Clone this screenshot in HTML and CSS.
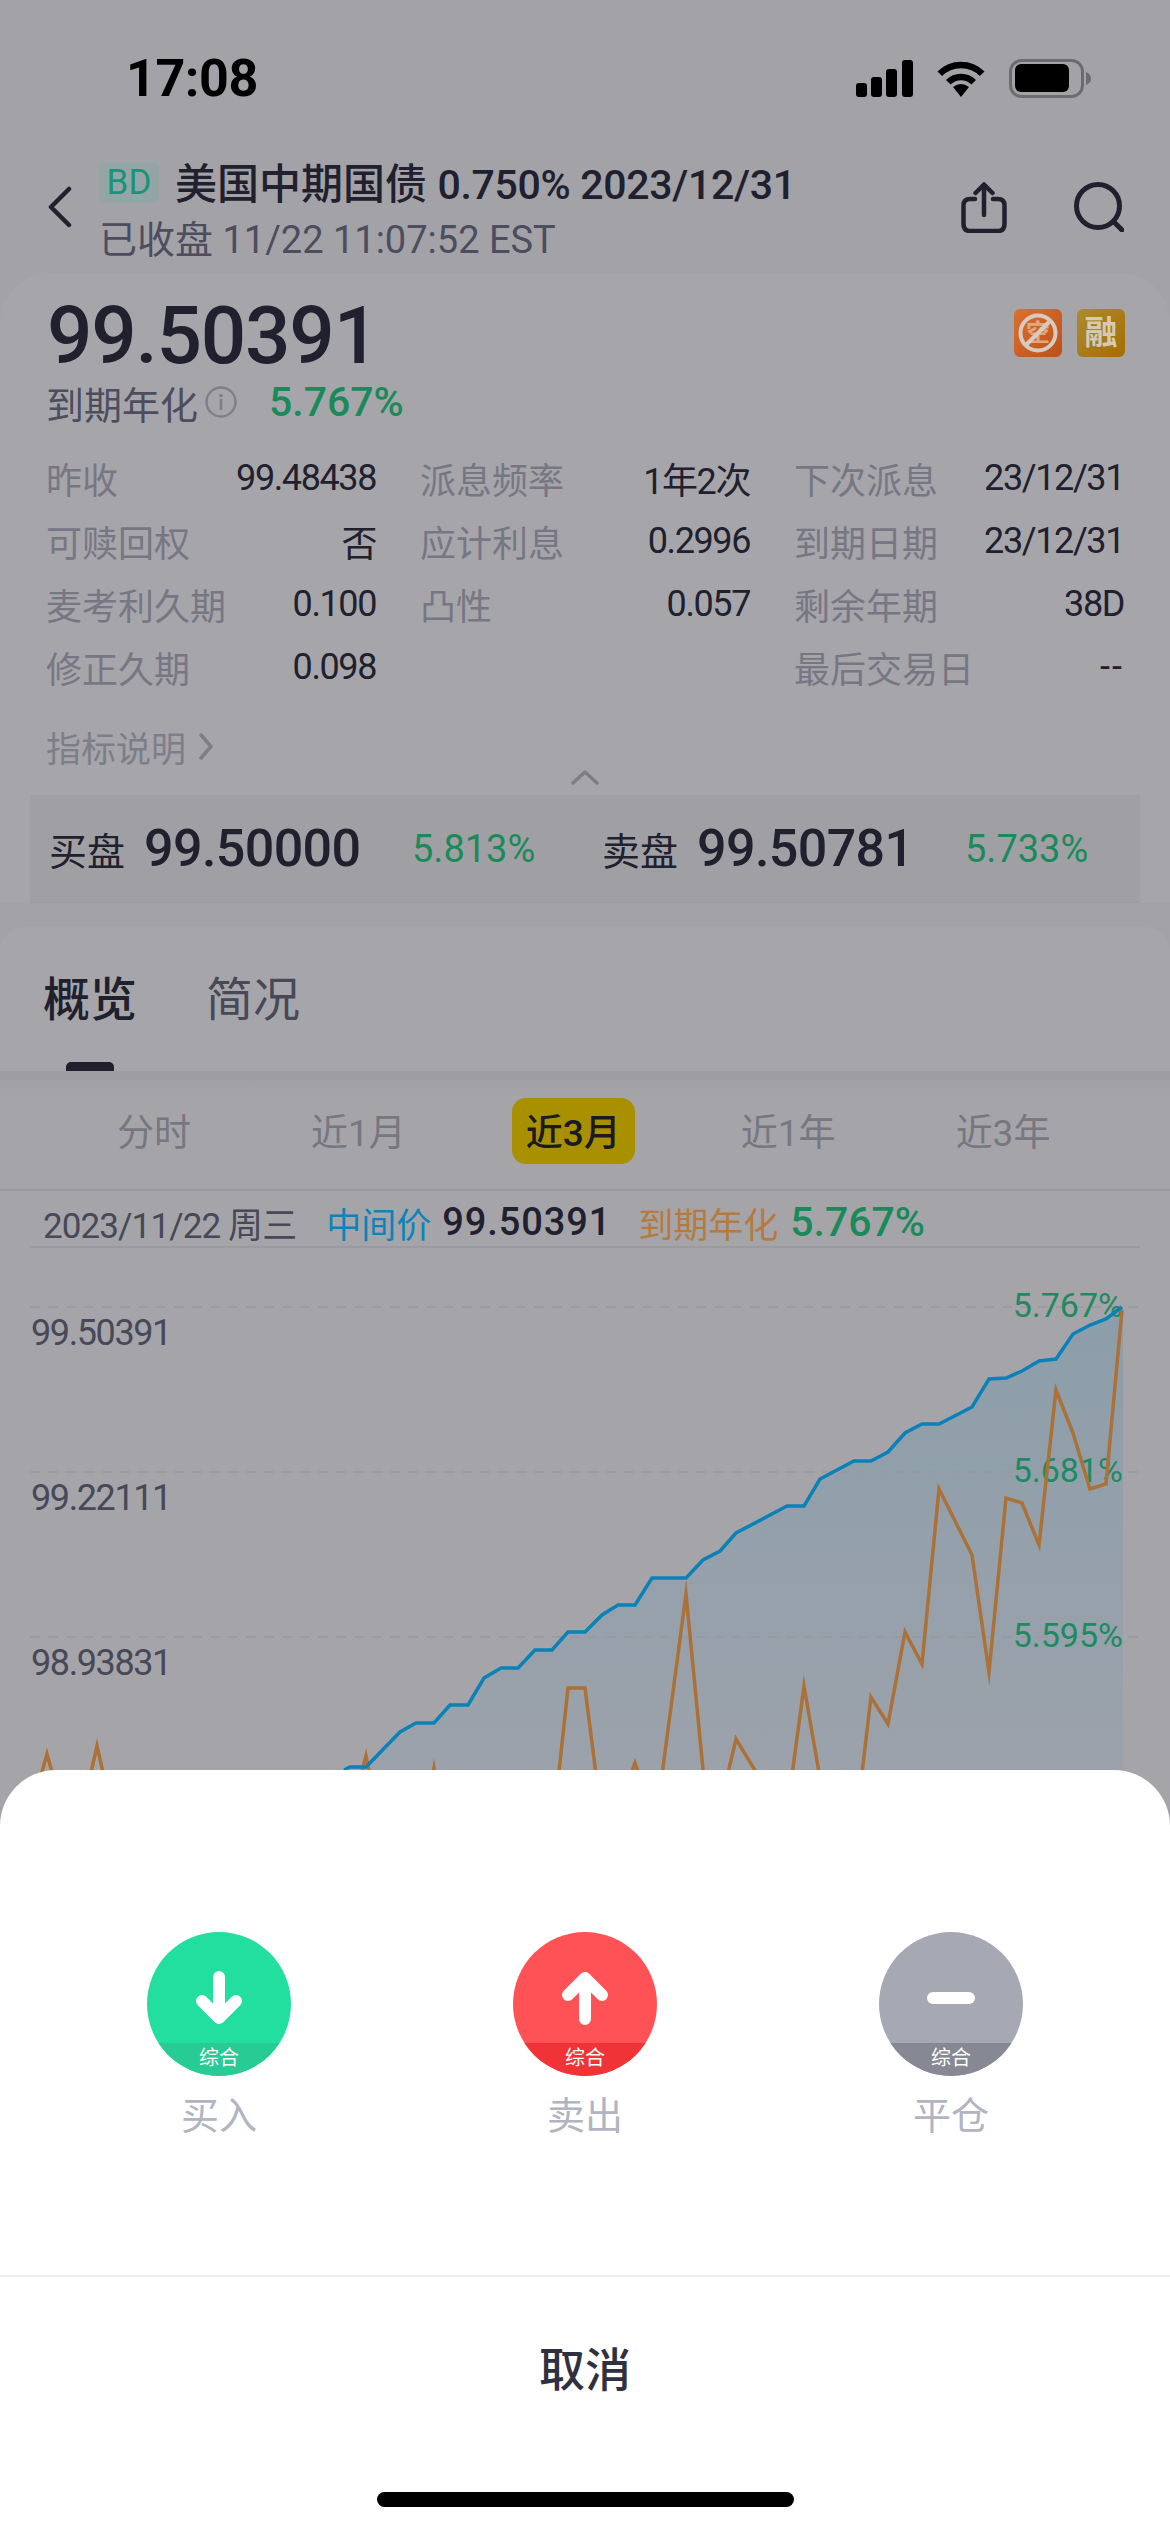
FILE: index.html
```html
<!doctype html>
<html lang="zh">
<head>
  <meta charset="UTF-8">
  <title>美国中期国债</title>
  <link rel="stylesheet" href="styles.css">
</head>
<body>
<div class="screen">

  <div class="status">
    <span class="clock">17:08</span>
    <div class="status-icons">
      <svg width="57" height="37" viewBox="0 0 57 37">
        <rect x="0" y="23" width="11" height="14" rx="3"/>
        <rect x="15" y="17" width="11" height="20" rx="3"/>
        <rect x="30" y="9" width="11" height="28" rx="3"/>
        <rect x="46" y="0" width="11" height="37" rx="3"/>
      </svg>
      <svg width="50" height="37" viewBox="0 0 50 37">
        <path d="M3.8 13.8A30 30 0 0 1 46.2 13.8M12.3 22.3A18 18 0 0 1 37.7 22.3" fill="none" stroke="#000" stroke-width="6.5"/>
        <path d="M25 37L17 27Q25 21 33 27Z"/>
      </svg>
      <svg width="82" height="39" viewBox="0 0 82 39">
        <rect x="1.5" y="1.5" width="72" height="36" rx="11" fill="none" stroke="#6c6c70" stroke-width="3"/>
        <rect x="6" y="5" width="54" height="28" rx="6"/>
        <path d="M77 13Q82 15 82 19.5T77 26Z" fill="#6c6c70"/>
      </svg>
    </div>
  </div>

  <div class="nav">
    <svg class="back" width="24" height="42" viewBox="0 0 24 42">
      <path d="M21 3L3 21L21 39" fill="none" stroke="#20202f" stroke-width="4.5" stroke-linecap="round" stroke-linejoin="round"/>
    </svg>
    <div class="nav-main">
      <div class="title-row">
        <span class="badge">BD</span>
        <span class="title">美国中期国债 <em>0.750% 2023/12/31</em></span>
      </div>
      <div class="subtitle">已收盘 11/22 11:07:52 EST</div>
    </div>
    <div class="nav-actions">
      <svg width="46" height="51" viewBox="0 0 46 51" fill="none" stroke="#20202f" stroke-width="4.5" stroke-linecap="round" stroke-linejoin="round">
        <path d="M14 17H9Q2.5 17 2.5 23.5V42Q2.5 49 9 49H37Q43.5 49 43.5 42V23.5Q43.5 17 37 17H32"/>
        <path d="M23 33V3M14.5 11L23 2.5L31.5 11"/>
      </svg>
      <svg width="50" height="50" viewBox="0 0 50 50" fill="none" stroke="#20202f" stroke-width="5" stroke-linecap="round">
        <circle cx="24" cy="24" r="21.5"/>
        <path d="M40 40L48 48"/>
      </svg>
    </div>
  </div>

  <div class="quote">
    <div class="price-row">
      <div class="price">99.50391</div>
      <div class="tags">
        <span class="tag tag-short">
          <svg width="48" height="48" viewBox="0 0 48 48">
            <text class="tag-glyph" x="24" y="32">空</text>
            <circle cx="24" cy="24" r="17.5" fill="none" stroke="#d6cbc2" stroke-width="4"/>
            <path d="M12 36L36 12" stroke="#d6cbc2" stroke-width="4"/>
          </svg>
        </span>
        <span class="tag tag-margin">融</span>
      </div>
    </div>
    <div class="yield-row">
      <span class="yield-label">到期年化</span>
      <svg class="info" width="32" height="32" viewBox="0 0 32 32">
        <circle cx="16" cy="16" r="14.5" fill="none" stroke="#7f7f8a" stroke-width="2.4"/>
        <rect x="14.7" y="13" width="2.6" height="11" fill="#7f7f8a"/>
        <circle cx="16" cy="9.5" r="1.8" fill="#7f7f8a"/>
      </svg>
      <span class="yield-val">5.767%</span>
    </div>

    <div class="stats">
      <div class="stat"><span class="k">昨收</span><span class="v">99.48438</span></div>
      <div class="stat"><span class="k">派息频率</span><span class="v">1年2次</span></div>
      <div class="stat"><span class="k">下次派息</span><span class="v">23/12/31</span></div>
      <div class="stat"><span class="k">可赎回权</span><span class="v">否</span></div>
      <div class="stat"><span class="k">应计利息</span><span class="v">0.2996</span></div>
      <div class="stat"><span class="k">到期日期</span><span class="v">23/12/31</span></div>
      <div class="stat"><span class="k">麦考利久期</span><span class="v">0.100</span></div>
      <div class="stat"><span class="k">凸性</span><span class="v">0.057</span></div>
      <div class="stat"><span class="k">剩余年期</span><span class="v">38D</span></div>
      <div class="stat"><span class="k">修正久期</span><span class="v">0.098</span></div>
      <div class="stat"></div>
      <div class="stat"><span class="k">最后交易日</span><span class="v v-empty">--</span></div>
    </div>

    <div class="explain">
      <span>指标说明</span>
      <svg width="16" height="27" viewBox="0 0 16 27">
        <path d="M3 2L13 13.5L3 25" fill="none" stroke="#7e7e88" stroke-width="3.5" stroke-linecap="round" stroke-linejoin="round"/>
      </svg>
    </div>
    <svg class="collapse" width="28" height="16" viewBox="0 0 28 16">
      <path d="M2 14L14 3L26 14" fill="none" stroke="#7d7d87" stroke-width="3.5" stroke-linecap="round" stroke-linejoin="round"/>
    </svg>

    <div class="book">
      <div class="side">
        <span class="side-label">买盘</span>
        <span class="side-px">99.50000</span>
        <span class="side-ytm">5.813%</span>
      </div>
      <div class="side">
        <span class="side-label">卖盘</span>
        <span class="side-px">99.50781</span>
        <span class="side-ytm">5.733%</span>
      </div>
    </div>
  </div>

  <div class="tabs">
    <div class="tab active">概览<i></i></div>
    <div class="tab">简况</div>
  </div>

  <div class="chart-area">
    <div class="ranges">
      <span class="range">分时</span>
      <span class="range">近1月</span>
      <span class="range on">近3月</span>
      <span class="range">近1年</span>
      <span class="range">近3年</span>
    </div>

    <div class="legend">
      <span class="lg-date">2023/11/22 周三</span>
      <span class="lg-blue">中间价</span>
      <span class="lg-px">99.50391</span>
      <span class="lg-orange">到期年化</span>
      <span class="lg-ytm">5.767%</span>
    </div>

    <svg class="chart" width="1170" height="560" viewBox="0 1248 1170 560">
      <defs>
        <linearGradient id="areaFill" x1="0" y1="1307" x2="0" y2="1780" gradientUnits="userSpaceOnUse">
          <stop offset="0" stop-color="#8c9eaa"/>
          <stop offset="1" stop-color="#9ca2ab"/>
        </linearGradient>
      </defs>
      <path fill="url(#areaFill)" d="M344 1770L350 1767L366 1767L400 1732L416 1723L434 1723L450 1705L468 1705L484 1678L501 1668L518 1668L535 1650L552 1650L568 1632L585 1632L602 1615L618 1605L635 1605L652 1578L686 1578L703 1560L720 1551L736 1533L787 1506L804 1506L820 1479L854 1461L871 1461L888 1452L905 1433L922 1424L939 1424L972 1407L989 1379L1006 1378L1022 1371L1039 1361L1056 1359L1073 1334L1090 1325L1106 1319L1123 1307V1808H344Z"/>
      <g class="grid">
        <path d="M30 1307H1140M30 1472H1140M30 1637H1140"/>
      </g>
      <text class="lbl-l" x="31" y="1345">99.50391</text>
      <text class="lbl-l" x="31" y="1510">99.22111</text>
      <text class="lbl-l" x="31" y="1675">98.93831</text>
      <text class="lbl-r" x="1123" y="1317">5.767%</text>
      <text class="lbl-r" x="1123" y="1482">5.681%</text>
      <text class="lbl-r" x="1123" y="1647">5.595%</text>
      <polyline class="ln-orange" points="37,1790 47,1754 57,1790 87,1790 97,1746 107,1790 357,1790 366,1756 373,1790 430,1790 434,1768 438,1790 557,1790 568,1688 585,1688 598,1790 625,1790 635,1763 645,1790 660,1790 686,1594 705,1790 724,1790 736,1739 767,1790 790,1790 804,1686 822,1790 860,1790 871,1697 888,1724 905,1632 922,1664 939,1489 972,1555 989,1672 1006,1498 1022,1503 1039,1545 1056,1390 1073,1433 1090,1489 1106,1484 1122,1310"/>
      <polyline class="ln-blue" points="344,1770 350,1767 366,1767 400,1732 416,1723 434,1723 450,1705 468,1705 484,1678 501,1668 518,1668 535,1650 552,1650 568,1632 585,1632 602,1615 618,1605 635,1605 652,1578 686,1578 703,1560 720,1551 736,1533 787,1506 804,1506 820,1479 854,1461 871,1461 888,1452 905,1433 922,1424 939,1424 972,1407 989,1379 1006,1378 1022,1371 1039,1361 1056,1359 1073,1334 1090,1325 1106,1319 1122,1307"/>
    </svg>
  </div>

  <div class="sheet">
    <div class="actions">
      <div class="action">
        <div class="disc disc-buy">
          <svg width="144" height="111" viewBox="0 0 144 111">
            <path d="M72 45V86M55 69L72 86L89 69" fill="none" stroke="#fff" stroke-width="12" stroke-linecap="round" stroke-linejoin="round"/>
          </svg>
          <div class="disc-band">综合</div>
        </div>
        <div class="action-label">买入</div>
      </div>
      <div class="action">
        <div class="disc disc-sell">
          <svg width="144" height="111" viewBox="0 0 144 111">
            <path d="M72 87V46M55 63L72 46L89 63" fill="none" stroke="#fff" stroke-width="12" stroke-linecap="round" stroke-linejoin="round"/>
          </svg>
          <div class="disc-band">综合</div>
        </div>
        <div class="action-label">卖出</div>
      </div>
      <div class="action">
        <div class="disc disc-close">
          <svg width="144" height="111" viewBox="0 0 144 111">
            <rect x="48" y="60" width="48" height="12" rx="6" fill="#fff"/>
          </svg>
          <div class="disc-band">综合</div>
        </div>
        <div class="action-label">平仓</div>
      </div>
    </div>
    <div class="cancel">取消</div>
    <div class="home-bar"></div>
  </div>

</div>
</body>
</html>
```

FILE: styles.css
```css
html, body {
  margin: 0;
  padding: 0;
}
body {
  width: 1170px;
  height: 2532px;
  overflow: hidden;
  font-family: Roboto, "Noto Sans CJK SC", sans-serif;
}
svg {
  display: block;
  flex: none;
}
.screen {
  position: relative;
  width: 1170px;
  height: 2532px;
  overflow: hidden;
  background: #a3a2a7;
}

/* status bar */
.status {
  height: 156px;
  display: flex;
  align-items: center;
  justify-content: space-between;
  padding: 0 79px 0 126px;
  box-sizing: border-box;
}
.clock {
  font-size: 52px;
  font-weight: 700;
  color: #000;
  letter-spacing: -.4px;
}
.status-icons {
  display: flex;
  align-items: center;
  gap: 23px;
}

/* nav */
.nav {
  height: 117px;
  box-sizing: border-box;
  display: flex;
  align-items: flex-start;
  padding: 6px 46px 0 48px;
}
.back {
  margin: 24px 27px 0 0;
}
.nav-main {
  flex: 1;
}
.title-row {
  display: flex;
  align-items: center;
  height: 41px;
  gap: 16px;
}
.badge {
  flex: none;
  display: block;
  width: 60px;
  height: 41px;
  line-height: 41px;
  text-align: center;
  border-radius: 6px;
  background: #93a6a5;
  color: #1c927a;
  font-size: 35px;
}
.title {
  position: relative;
  top: -2px;
  font-size: 42px;
  font-weight: 500;
  color: #20202f;
  white-space: nowrap;
}
.title em {
  font-style: normal;
  font-size: 41px;
  letter-spacing: -.3px;
}
.subtitle {
  margin-top: 18px;
  line-height: 38px;
  font-size: 38px;
  color: #4c4d5f;
  white-space: nowrap;
}
.nav-actions {
  display: flex;
  gap: 67px;
  margin-top: 20px;
}

/* quote card */
.quote {
  height: 630px;
  box-sizing: border-box;
  padding-top: 30px;
  border-radius: 50px 50px 0 0;
  background: #a6a5aa;
}
.price-row {
  display: flex;
  justify-content: space-between;
  align-items: flex-start;
  padding: 0 45px 0 47px;
}
.price {
  font-size: 80px;
  line-height: 66px;
  font-weight: 500;
  letter-spacing: -1.2px;
  color: #20202f;
}
.tags {
  display: flex;
  gap: 15px;
  margin-top: 6px;
}
.tag {
  width: 48px;
  height: 48px;
  border-radius: 6px;
  text-align: center;
  line-height: 48px;
}
.tag-short {
  background: linear-gradient(135deg, #da7230, #bd4f18);
}
.tag-glyph {
  font-size: 24px;
  font-weight: 700;
  fill: #e3a77f;
  text-anchor: middle;
}
.tag-margin {
  background: linear-gradient(135deg, #ad8a32, #a56e00);
  color: #d5cbb5;
  font-size: 33px;
  font-weight: 700;
}
.yield-row {
  display: flex;
  align-items: center;
  height: 40px;
  margin-top: 13px;
  padding-left: 46px;
}
.yield-label {
  font-size: 38px;
  color: #4c4d5f;
}
.info {
  margin-left: 7px;
}
.yield-val {
  margin-left: 32px;
  font-size: 41px;
  font-weight: 500;
  color: #1b8a5a;
}

.stats {
  display: grid;
  grid-template-columns: repeat(3, 330px);
  grid-auto-rows: 63px;
  column-gap: 44px;
  margin: 24px 0 0 46px;
}
.stat {
  display: flex;
  align-items: center;
  justify-content: space-between;
}
.k {
  font-size: 36px;
  color: #777784;
}
.v {
  font-size: 36px;
  letter-spacing: -1.4px;
  color: #20202f;
}
.v-empty {
  letter-spacing: 2px;
}
.explain {
  display: flex;
  align-items: center;
  gap: 12px;
  height: 38px;
  margin: 29px 0 0 46px;
  font-size: 35px;
  color: #7e7e88;
}
.collapse {
  margin: 4px auto 0;
}
.book {
  height: 108px;
  display: flex;
  align-items: center;
  margin: 10px 30px 0;
  padding-left: 19px;
  background: #a0a0a4;
  border-bottom: 1px solid #9a9a9f;
  box-sizing: border-box;
}
.side {
  display: flex;
  align-items: center;
  width: 553px;
  flex: none;
}
.side-label {
  width: 76px;
  font-size: 38px;
  color: #20202f;
}
.side-px {
  width: 213px;
  margin-left: 19px;
  font-size: 52px;
  font-weight: 500;
  letter-spacing: -.6px;
  color: #20202f;
}
.side-ytm {
  margin-left: 55px;
  font-size: 38px;
  color: #1b8a5a;
}

/* tabs */
.tabs {
  height: 144px;
  box-sizing: border-box;
  margin-top: 24px;
  padding: 43px 0 0 43px;
  display: flex;
  gap: 69px;
  overflow: hidden;
  border-radius: 24px 24px 0 0;
  background: #a6a5aa;
}
.tab {
  display: flex;
  flex-direction: column;
  align-items: center;
  font-size: 47px;
  line-height: 60px;
  color: #474858;
}
.tab.active {
  font-weight: 500;
  color: #20202f;
}
.tab i {
  width: 48px;
  height: 9px;
  margin-top: 32px;
  border-radius: 5px 5px 0 0;
  background: #1f1f2e;
}

/* period switch */
.chart-area {
  background: #a5a4a9;
}
.ranges {
  height: 120px;
  box-sizing: border-box;
  padding: 27px 0 0 117px;
  display: flex;
  align-items: flex-start;
  gap: 120px;
  background: linear-gradient(#9d9ca1, #a5a4a9 24px);
  border-bottom: 2px solid #9b9aa0;
}
.range {
  height: 66px;
  line-height: 71px;
  font-size: 37px;
  color: #77777f;
  white-space: nowrap;
}
.range.on {
  margin: 0 -14px;
  padding: 0 14px;
  border-radius: 14px;
  background: #a89000;
  font-weight: 500;
  color: #1a1a24;
}

/* chart */
.legend {
  height: 57px;
  box-sizing: border-box;
  display: flex;
  align-items: center;
  margin: 0 30px;
  padding: 7px 0 0 13px;
  border-bottom: 2px solid #9b9aa0;
  font-size: 35px;
  white-space: nowrap;
}
.lg-date {
  color: #474858;
  letter-spacing: -.9px;
}
.lg-blue {
  margin-left: 30px;
  color: #0b84ba;
}
.lg-px {
  margin-left: 11px;
  font-weight: 500;
  font-size: 38px;
  letter-spacing: .9px;
  color: #20202f;
}
.lg-orange {
  margin-left: 27px;
  color: #b57b3c;
}
.lg-ytm {
  margin-left: 12px;
  font-weight: 500;
  font-size: 41px;
  color: #1b8a5a;
}
.grid path {
  fill: none;
  stroke: #98989e;
  stroke-width: 1.5;
  stroke-dasharray: 10 8;
}
.lbl-l {
  font-size: 36px;
  letter-spacing: -1.4px;
  fill: #474858;
}
.lbl-r {
  font-size: 34px;
  text-anchor: end;
  fill: #1e8a62;
}
.ln-orange,
.ln-blue {
  fill: none;
  stroke-width: 3.5;
  stroke-miterlimit: 12;
}
.ln-orange {
  stroke: #ab7136;
}
.ln-blue {
  stroke: #0a82b8;
}

/* bottom sheet */
.sheet {
  position: absolute;
  left: 0;
  right: 0;
  bottom: 0;
  height: 762px;
  border-radius: 56px 56px 0 0;
  background: #fff;
}
.actions {
  height: 507px;
  box-sizing: border-box;
  display: flex;
  padding: 162px 36px 0;
  border-bottom: 2px solid #eeeef3;
}
.action {
  flex: 1;
  display: flex;
  flex-direction: column;
  align-items: center;
}
.disc {
  width: 144px;
  height: 144px;
  border-radius: 50%;
  overflow: hidden;
}
.disc-band {
  height: 33px;
  line-height: 30px;
  text-align: center;
  font-size: 20px;
  color: #fff;
}
.disc-buy { background: #22df9f; }
.disc-buy .disc-band { background: #26cc94; }
.disc-sell { background: #ff5257; }
.disc-sell .disc-band { background: #ef3337; }
.disc-close { background: #a6a9b4; }
.disc-close .disc-band { background: #868893; }
.action-label {
  margin-top: 18px;
  line-height: 44px;
  font-size: 38px;
  color: #b1b4c1;
}
.cancel {
  height: 186px;
  line-height: 186px;
  text-align: center;
  font-size: 46px;
  font-weight: 500;
  color: #2f3040;
}
.home-bar {
  width: 417px;
  height: 15px;
  margin: 29px auto 0;
  border-radius: 8px;
  background: #000;
}
```
